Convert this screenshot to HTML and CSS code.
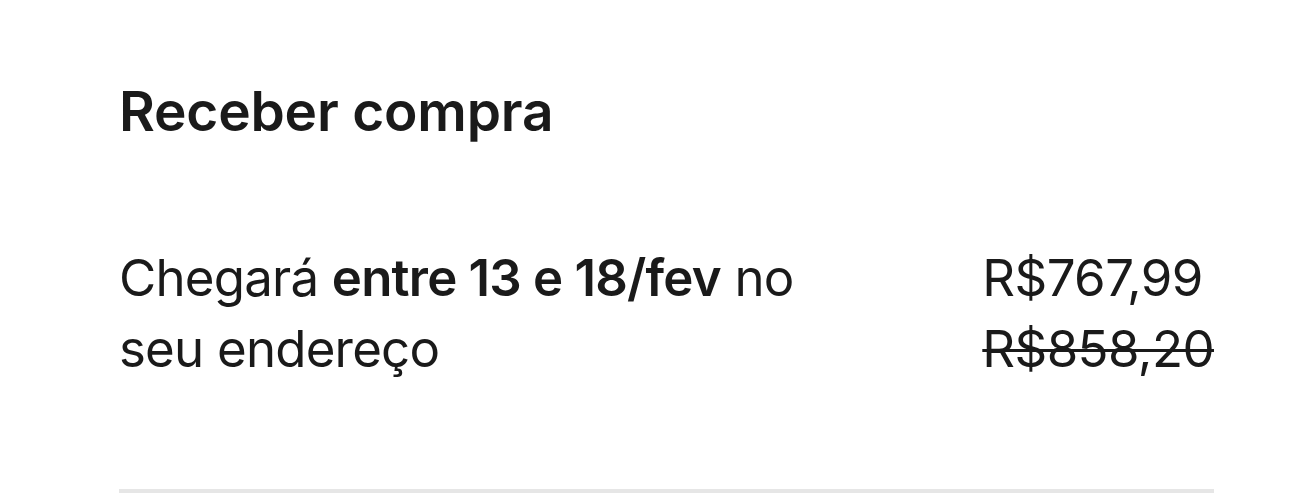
FILE: index.html
```html
<!DOCTYPE html>
<html lang="pt-BR">
<head>
<meta charset="utf-8">
<title>Receber compra</title>
<link rel="stylesheet" href="styles.css">
</head>
<body>
  <section class="shipping">
    <h2 class="shipping__title">Receber compra</h2>
    <div class="shipping__row">
      <p class="shipping__eta">Chegará <strong>entre 13 e 18/fev</strong> no seu endereço</p>
      <div class="shipping__prices">
        <span class="price price--current">R$767,99</span>
        <s class="price price--old">R$858,20</s>
      </div>
    </div>
    <hr class="shipping__divider">
  </section>
</body>
</html>
```
FILE: styles.css
```css
html, body {
  margin: 0;
  padding: 0;
  background: #ffffff;
}

body {
  font-family: Inter, "Noto Sans", sans-serif;
  color: #1a1a1a;
}

.shipping {
  padding: 83px 102px 0 119px;
}

.shipping__title {
  margin: 0;
  font-size: 55px;
  font-weight: 600;
  line-height: 56px;
  letter-spacing: -0.2px;
}

.shipping__row {
  display: flex;
  justify-content: space-between;
  align-items: flex-start;
  margin-top: 103px;
}

.shipping__eta {
  margin: 0;
  max-width: 700px;
  font-size: 51px;
  line-height: 71px;
  font-weight: 400;
  letter-spacing: -0.8px;
}

.shipping__eta strong {
  font-weight: 600;
}

.shipping__prices {
  display: flex;
  flex-direction: column;
}

.price {
  font-size: 51px;
  line-height: 71px;
  font-weight: 400;
  letter-spacing: -0.6px;
}

.price--old {
  text-decoration-thickness: 3px;
}

.shipping__divider {
  margin: 105px 0 0;
  height: 4px;
  border: 0;
  background: #e6e6e6;
}
```
